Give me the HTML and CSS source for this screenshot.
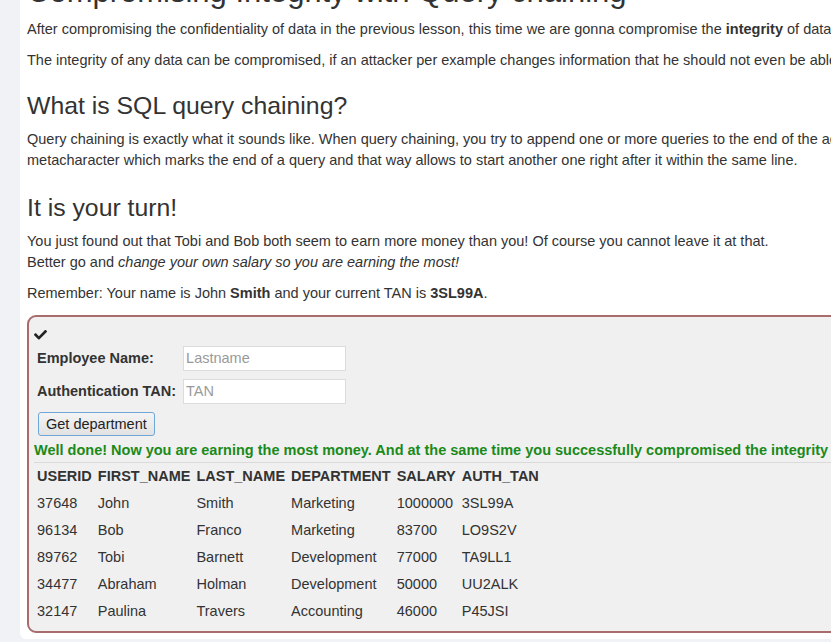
FILE: index.html
```html
<!DOCTYPE html>
<html lang="en">
<head>
    <meta charset="UTF-8">
    <title>SQL Injection - Query chaining</title>
    <link rel="stylesheet" href="styles.css">
</head>
<body>
<div class="lesson-page">
    <h1>Compromising Integrity with Query chaining</h1>
    <p>After compromising the confidentiality of data in the previous lesson, this time we are gonna compromise the <b>integrity</b> of data by using SQL query chaining.</p>
    <p>The integrity of any data can be compromised, if an attacker per example changes information that he should not even be able to access.</p>

    <h2>What is SQL query chaining?</h2>
    <p>Query chaining is exactly what it sounds like. When query chaining, you try to append one or more queries to the end of the actual query. You can do this by using the ; metacharacter which marks the end of a query and that way allows to start another one right after it within the same line.</p>

    <h2 class="lesson-turn">It is your turn!</h2>
    <p>You just found out that Tobi and Bob both seem to earn more money than you! Of course you cannot leave it at that.<br>
        Better go and <i>change your own salary so you are earning the most!</i></p>
    <p>Remember: Your name is John <b>Smith</b> and your current TAN is <b>3SL99A</b>.</p>

    <div class="attack-container">
        <div class="assignment-success">
            <svg width="13" height="11" viewBox="0 0 512 420">
                <path fill="#222" d="M173.9 403.4l-166.4-166.4c-10-10-10-26.2 0-36.2l36.2-36.2c10-10 26.2-10 36.2 0L192 276.7 432.1 36.6c10-10 26.2-10 36.2 0l36.2 36.2c10 10 10 26.2 0 36.2l-294.4 294.4c-10 10-26.2 10-36.2 0z"/>
            </svg>
        </div>
        <form class="attack-form">
            <table class="attack-fields">
                <tr>
                    <td class="attack-label">Employee Name:</td>
                    <td><input type="text" name="name" placeholder="Lastname"></td>
                </tr>
                <tr>
                    <td class="attack-label">Authentication TAN:</td>
                    <td><input type="text" name="auth_tan" placeholder="TAN"></td>
                </tr>
            </table>
            <button type="button" class="attack-submit">Get department</button>
        </form>
        <div class="attack-feedback">Well done! Now you are earning the most money. And at the same time you successfully compromised the integrity of data by changing the salary!</div>
        <div class="attack-output">
            <table class="result-table">
                <tr>
                    <th>USERID</th><th>FIRST_NAME</th><th>LAST_NAME</th><th>DEPARTMENT</th><th>SALARY</th><th>AUTH_TAN</th>
                </tr>
                <tr>
                    <td>37648</td><td>John</td><td>Smith</td><td>Marketing</td><td>1000000</td><td>3SL99A</td>
                </tr>
                <tr>
                    <td>96134</td><td>Bob</td><td>Franco</td><td>Marketing</td><td>83700</td><td>LO9S2V</td>
                </tr>
                <tr>
                    <td>89762</td><td>Tobi</td><td>Barnett</td><td>Development</td><td>77000</td><td>TA9LL1</td>
                </tr>
                <tr>
                    <td>34477</td><td>Abraham</td><td>Holman</td><td>Development</td><td>50000</td><td>UU2ALK</td>
                </tr>
                <tr>
                    <td>32147</td><td>Paulina</td><td>Travers</td><td>Accounting</td><td>46000</td><td>P45JSI</td>
                </tr>
            </table>
        </div>
    </div>
</div>
</body>
</html>
```

FILE: styles.css
```css
html,
body {
    margin: 0;
    height: 100%;
    overflow: hidden;
    background-color: #f0f2f5;
}

body {
    font-family: "Liberation Sans", Arial, sans-serif;
    font-size: 14.5px;
    line-height: 21px;
    color: #333;
}

.lesson-page {
    width: 1120px;
    margin-left: 20px;
    padding: 0 0 6px 7px;
    background-color: #fff;
    border-bottom-left-radius: 6px;
}

h1 {
    font-size: 31px;
    line-height: 34px;
    font-weight: normal;
    margin: -25.5px 0 10px;
}

h2 {
    font-size: 24.8px;
    line-height: 27px;
    font-weight: normal;
    margin: 21.5px 0 10px;
}

.lesson-turn {
    margin-top: 23px;
}

p {
    margin: 0 0 10px;
}

.attack-container {
    margin-top: 10.5px;
    padding: 5px;
    border: 2px solid #a86c6d;
    border-radius: 9px;
    background-color: #f0f0f0;
}

.assignment-success {
    height: 20px;
}

.assignment-success svg {
    display: block;
    padding-top: 7px;
}

.attack-fields {
    border-spacing: 0;
}

.attack-fields td {
    padding: 4px 4px 4px 3px;
}

.attack-label {
    font-weight: bold;
}

.attack-fields input {
    box-sizing: border-box;
    width: 163px;
    height: 25px;
    padding: 0 2px;
    border: 1px solid #dcdcdc;
    background-color: #fff;
    font-family: inherit;
    font-size: 14.5px;
    color: #333;
}

.attack-fields input::placeholder {
    color: #9a9a9a;
}

.attack-submit {
    display: block;
    height: 24px;
    margin: 4px 0 4px 4px;
    padding: 0 7px;
    border: 1px solid #6fa6d8;
    border-radius: 3px;
    background: linear-gradient(#f4f4f4, #e2e2e2);
    font-family: inherit;
    font-size: 14.5px;
    color: #222;
}

.attack-feedback {
    font-weight: bold;
    color: #1a8a1a;
    white-space: nowrap;
}

.attack-output {
    margin-top: 1px;
    border-top: 1px solid #dadada;
}

.result-table {
    border-spacing: 0;
}

.result-table th,
.result-table td {
    padding: 3px 3px 3.2px;
    text-align: left;
}
```
